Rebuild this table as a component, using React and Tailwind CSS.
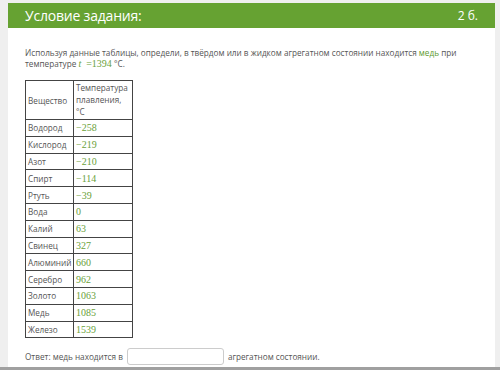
import React from 'react';

const rows = [
  ['Водород', '−258'],
  ['Кислород', '−219'],
  ['Азот', '−210'],
  ['Спирт', '−114'],
  ['Ртуть', '−39'],
  ['Вода', '0'],
  ['Калий', '63'],
  ['Свинец', '327'],
  ['Алюминий', '660'],
  ['Серебро', '962'],
  ['Золото', '1063'],
  ['Медь', '1085'],
  ['Железо', '1539'],
];

const num = "font-['Liberation_Serif',serif] text-[#6a9f3a]";

const App = () => {
  return (
    <div className="w-[500px] h-[370px] bg-[#efefef] pt-[3px] font-['Open_Sans',sans-serif] overflow-hidden flex flex-col">
      <div className="ml-[8px] mr-[5px] flex-1 bg-white flex flex-col">
        <div className="h-[25px] bg-[#66a232] flex items-center justify-between pl-[17px] pr-[17px] text-white">
          <span className="text-[14px] tracking-[-0.2px] leading-none">Условие задания:</span>
          <span className="text-[12px] leading-none">2 б.</span>
        </div>
        <div className="pl-[17px] pr-[10px] pt-[19px] text-[8.2px] leading-[11px] text-[#555]">
          <p>
            Используя данные таблицы, определи, в твёрдом или в жидком агрегатном состоянии находится{' '}
            <span className="text-[#5d9a2f]">медь</span> при
            <br />
            температуре{' '}
            <span className={`${num} text-[10px]`}>
              <i>t</i>&nbsp;&nbsp;=1394
            </span>{' '}
            °C.
          </p>
          <table className="mt-[11px] border-collapse border border-[#444] table-fixed w-[107px]">
            <tbody>
              <tr className="h-[39px]">
                <td className="w-[48px] border border-[#444] px-[2px]">Вещество</td>
                <td className="w-[59px] border border-[#444] px-[2px] align-top pt-[1px] leading-[12px]">
                  Температура плавления, °C
                </td>
              </tr>
              {rows.map(([name, t]) => (
                <tr key={name} className="h-[16.8px]">
                  <td className="border border-[#444] px-[2px] whitespace-nowrap overflow-hidden">{name}</td>
                  <td className={`border border-[#444] px-[2px] text-[10px] ${num}`}>{t}</td>
                </tr>
              ))}
            </tbody>
          </table>
          <div className="mt-[10px] flex items-center gap-[4px]">
            <span>Ответ: медь находится в</span>
            <span className="w-[97px] h-[17px] border border-[#ccc] rounded-[3px] bg-white" />
            <span>агрегатном состоянии.</span>
          </div>
        </div>
      </div>
      <div className="h-[3px] bg-[#a0a0a0]" />
    </div>
  );
};

export default App;
